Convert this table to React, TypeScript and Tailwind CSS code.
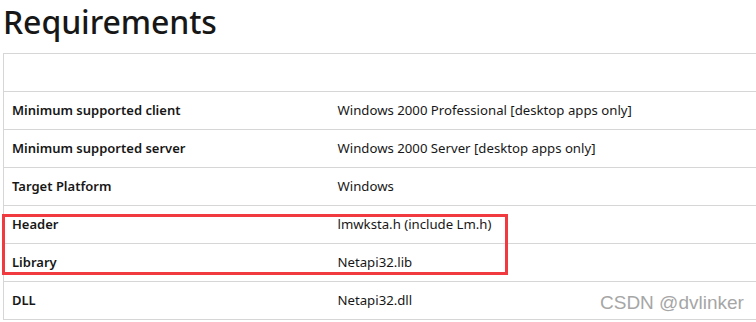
import React from "react";

const rows: [string, string][] = [
  ["Minimum supported client", "Windows 2000 Professional [desktop apps only]"],
  ["Minimum supported server", "Windows 2000 Server [desktop apps only]"],
  ["Target Platform", "Windows"],
  ["Header", "lmwksta.h (include Lm.h)"],
  ["Library", "Netapi32.lib"],
  ["DLL", "Netapi32.dll"],
];

const App: React.FC = () => {
  return (
    <div className="relative h-[322px] w-[756px] overflow-hidden bg-white font-['Noto_Sans',sans-serif] text-[#171717]">
      <h1 className="ml-[3px] text-[32px] font-medium leading-[44px] tracking-[-0.1px]">
        Requirements
      </h1>

      <div className="ml-[3px] mt-[9px] w-[800px]">
        <table className="w-full border-collapse text-[13.2px]">
          <thead>
            <tr className="h-[38px] border-y border-l border-[#d6d6d6]">
              <th className="w-[326px]" />
              <th />
            </tr>
          </thead>
          <tbody>
            {rows.map(([label, value]) => (
              <tr key={label} className="h-[38px] border-b border-l border-[#d6d6d6]">
                <td className="pl-[8px] text-[13px] font-semibold">{label}</td>
                <td className="pl-[8px]">{value}</td>
              </tr>
            ))}
          </tbody>
        </table>
      </div>

      {/* annotation box */}
      <div className="absolute left-[2px] top-[214px] h-[61px] w-[506px] border-[3px] border-[#f03a40]" />

      {/* watermark */}
      <div className="absolute left-[600px] top-[292px] font-['Liberation_Sans',sans-serif] text-[19px] leading-[22px] text-[#a6a6a6]">
        CSDN @dvlinker
      </div>
    </div>
  );
};

export default App;
